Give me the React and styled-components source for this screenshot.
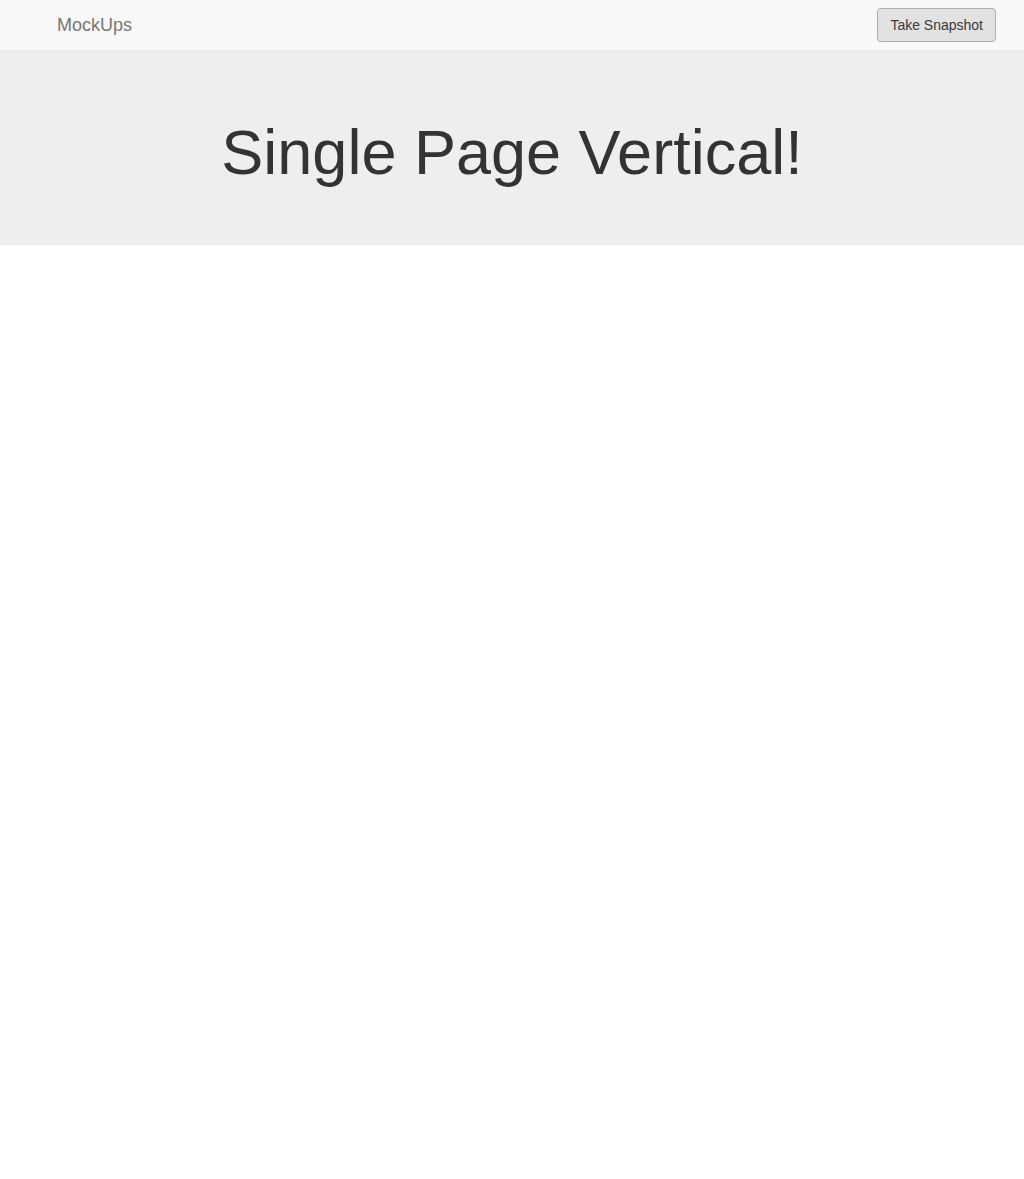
import React from "react";
import styled, { createGlobalStyle } from "styled-components";

const GlobalStyle = createGlobalStyle`
  html, body {
    margin: 0;
    padding: 0;
    background: #fff;
  }
  body {
    font-family: "Liberation Sans", Arial, Helvetica, sans-serif;
    font-size: 14px;
    line-height: 1.42857;
    color: #333;
  }
`;

const Navbar = styled.nav`
  height: 50px;
  background-color: #f8f8f8;
  border-bottom: 1px solid #e7e7e7;
  display: flex;
  align-items: flex-start;
  justify-content: space-between;
  padding: 0 28px 0 42px;
`;

const Brand = styled.a`
  padding: 15px;
  font-size: 18px;
  line-height: 20px;
  color: #777;
  text-decoration: none;
`;

const SnapshotButton = styled.button`
  margin-top: 8px;
  height: 34px;
  padding: 6px 12px;
  font-family: inherit;
  font-size: 14px;
  line-height: 20px;
  color: #3a3a3a;
  background-color: #e2e2e2;
  border: 1px solid #adadad;
  border-radius: 4px;
  cursor: pointer;
`;

const Jumbotron = styled.section`
  background-color: #eee;
  padding: 48px 0;
  text-align: center;
`;

const Title = styled.h1`
  margin: 19px 0 10px;
  font-size: 63px;
  font-weight: 500;
  line-height: 1.1;
  color: #333;
`;

export default function App() {
  return (
    <>
      <GlobalStyle />
      <Navbar>
        <Brand href="#">MockUps</Brand>
        <SnapshotButton>Take Snapshot</SnapshotButton>
      </Navbar>
      <Jumbotron>
        <Title>Single Page Vertical!</Title>
      </Jumbotron>
    </>
  );
}
